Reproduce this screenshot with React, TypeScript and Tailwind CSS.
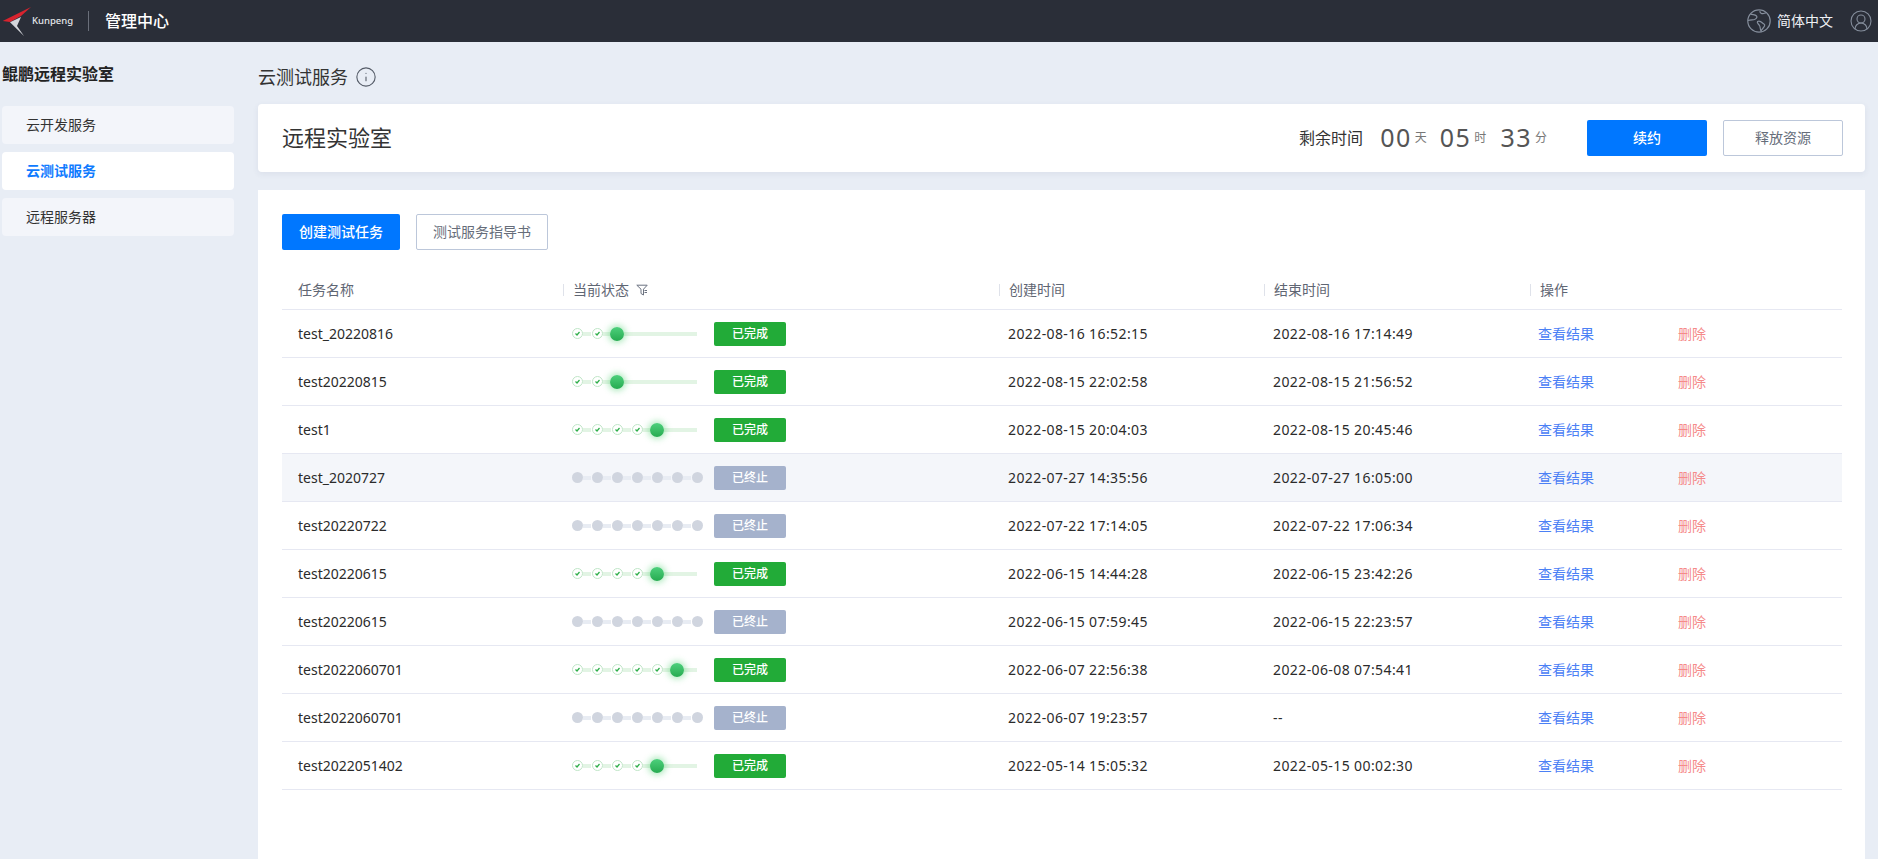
import { CircleUserRound, Info } from 'lucide-react';

const FONT = "font-['Noto_Sans','Noto_Sans_CJK_SC',sans-serif]";

interface Task {
  name: string;
  active: number | null;
  created: string;
  ended: string;
  hover?: boolean;
}

const TASKS: Task[] = [
  { name: 'test_20220816', active: 2, created: '2022-08-16 16:52:15', ended: '2022-08-16 17:14:49' },
  { name: 'test20220815', active: 2, created: '2022-08-15 22:02:58', ended: '2022-08-15 21:56:52' },
  { name: 'test1', active: 4, created: '2022-08-15 20:04:03', ended: '2022-08-15 20:45:46' },
  { name: 'test_2020727', active: null, created: '2022-07-27 14:35:56', ended: '2022-07-27 16:05:00', hover: true },
  { name: 'test20220722', active: null, created: '2022-07-22 17:14:05', ended: '2022-07-22 17:06:34' },
  { name: 'test20220615', active: 4, created: '2022-06-15 14:44:28', ended: '2022-06-15 23:42:26' },
  { name: 'test20220615', active: null, created: '2022-06-15 07:59:45', ended: '2022-06-15 22:23:57' },
  { name: 'test2022060701', active: 5, created: '2022-06-07 22:56:38', ended: '2022-06-08 07:54:41' },
  { name: 'test2022060701', active: null, created: '2022-06-07 19:23:57', ended: '--' },
  { name: 'test2022051402', active: 4, created: '2022-05-14 15:05:32', ended: '2022-05-15 00:02:30' },
];

function Logo() {
  return (
    <svg width="32" height="34" viewBox="0 0 32 34" className="shrink-0">
      <path d="M31 3 L2.7 17 L10 18 L21 12 Z" fill="#d8232e" />
      <path d="M10 18.2 L21 13 L17 22 L24 32 Z" fill="#d3d5da" />
    </svg>
  );
}

function Globe() {
  return (
    <svg width="24" height="24" viewBox="0 0 24 24" fill="none" stroke="#858e9c" strokeWidth="1.2">
      <circle cx="12" cy="12" r="11.2" />
      <path d="M3.5 5 C6 6 8 5.5 9.5 7 C11 8.5 8.5 10 7.5 10.5 C6 11.2 4 10.5 1 11.5" />
      <path d="M13 2 C12.5 4 15 5 16.5 4.5 C18 4 19 3.5 19.5 4" />
      <path d="M10.5 12.5 C12 11.5 14 12.5 15.5 14 C17 15.5 18.5 15 17.5 17 C16.5 19 15 20 14 22 C13 20.5 13.5 18 12.5 16.5 C11.5 15 9.5 14 10.5 12.5 Z" />
    </svg>
  );
}

function FilterIcon() {
  return (
    <svg width="12" height="12" viewBox="0 0 12 12" fill="none" stroke="#6b7280" strokeWidth="1" className="ml-[7px]">
      <path d="M0.8 1.2 H11.2 L7.5 5.2 V11 L5 9.5 V5.2 Z" />
      <path d="M8.5 6.5 H11 M8.5 8.5 H11" />
    </svg>
  );
}

function DoneDot() {
  return (
    <span className="-mx-[0.5px] flex h-[11px] w-[11px] shrink-0 items-center justify-center rounded-full border-[1.5px] border-[#bfe6c7] bg-white">
      <svg width="5" height="5" viewBox="0 0 6 6" fill="none" stroke="#2fae4a" strokeWidth="1.5" className="shrink-0">
        <path d="M0.6 3 L2.4 4.8 L5.4 1.2" />
      </svg>
    </span>
  );
}

function Stepper({ active }: { active: number | null }) {
  const steps = [0, 1, 2, 3, 4, 5, 6];

  if (active === null) {
    return (
      <div className="flex w-[136px] items-center">
        {steps.map((s) => (
          <div key={s} className="flex items-center">
            <span className="-mx-[0.5px] h-[11px] w-[11px] rounded-full bg-[#d0d5df]" />
            {s < 6 && <span className="mx-[1px] h-1 w-2 bg-[#e8ecf3]" />}
          </div>
        ))}
      </div>
    );
  }

  return (
    <div className="flex w-[136px] items-center">
      {steps.map((s) => (
        <div key={s} className="flex items-center">
          {s < active && <DoneDot />}
          {s === active && (
            <span className="relative z-10 flex h-1 w-[10px] items-center justify-center bg-[#e2f4e4]">
              <span className="h-[14px] w-[14px] shrink-0 rounded-full bg-gradient-to-b from-[#4dd07c] to-[#25ab50] shadow-[0_0_6px_2px_rgba(52,199,89,0.4)]" />
            </span>
          )}
          {s > active && <span className={`h-1 bg-[#e2f4e4] ${s === 6 ? 'w-[5px]' : 'w-[10px]'}`} />}
          {s < 6 && (
            <span className={`h-1 bg-[#e2f4e4] ${s < active ? 'mx-[1px] w-2' : 'w-[10px]'}`} />
          )}
        </div>
      ))}
    </div>
  );
}

function StatusBadge({ done }: { done: boolean }) {
  return (
    <span
      className={`flex h-6 w-[72px] items-center justify-center rounded-[2px] text-xs font-medium text-white ${
        done ? 'bg-[#22ab38]' : 'bg-[#a5b2cc]'
      }`}
    >
      {done ? '已完成' : '已终止'}
    </span>
  );
}

function HeadCell({ children, className }: { children: React.ReactNode; className: string }) {
  return (
    <div className={`flex items-center ${className}`}>
      <span className="mr-[9px] h-3 w-px bg-[#dfe2ea]" />
      {children}
    </div>
  );
}

function Timer({ value, unit, className }: { value: string; unit: string; className: string }) {
  return (
    <div className={`flex items-center ${className}`}>
      <span className="text-[25px] tracking-[1.5px] text-[#555]">{value}</span>
      <span className="ml-[3px] text-xs text-[#777]">{unit}</span>
    </div>
  );
}

export default function App() {
  return (
    <div className={`flex h-screen flex-col overflow-hidden bg-[#e8edf5] text-sm text-[#2b2b2b] ${FONT}`}>
      <header className="flex h-[42px] shrink-0 items-center bg-[#2a2e38] pr-[5px] text-white">
        <Logo />
        <span className="text-[9.5px] font-medium text-[#e4e6ea]">Kunpeng</span>
        <span className="ml-[15px] h-5 w-px bg-[#6a6f7a]" />
        <span className="ml-[16px] text-base font-medium">管理中心</span>
        <div className="ml-auto flex items-center">
          <Globe />
          <span className="ml-[6px] text-sm text-[#eef0f4]">简体中文</span>
          <CircleUserRound size={24} strokeWidth={1.1} color="#858e9c" className="ml-4" />
        </div>
      </header>

      <div className="flex min-h-0 flex-1">
        <aside className="w-[258px] shrink-0 pl-[2px]">
          <h2 className="mt-[21px] text-base leading-[22px] font-bold text-[#222]">鲲鹏远程实验室</h2>
          <nav className="mt-[21px] flex w-[232px] flex-col gap-2">
            <div className="flex h-[38px] items-center rounded bg-[#f3f5fa] pl-6 text-[#333]">云开发服务</div>
            <div className="flex h-[38px] items-center rounded bg-white pl-6 font-bold text-[#0f7bff]">云测试服务</div>
            <div className="flex h-[38px] items-center rounded bg-[#f3f5fa] pl-6 text-[#333]">远程服务器</div>
          </nav>
        </aside>

        <main className="flex min-w-0 flex-1 flex-col pr-[13px]">
          <div className="flex h-[62px] shrink-0 items-center">
            <span className="mt-[8px] text-lg text-[#333]">云测试服务</span>
            <Info size={22} strokeWidth={1.2} color="#555c68" className="mt-[8px] ml-[7px]" />
          </div>

          <section className="flex h-[68px] shrink-0 items-center rounded bg-white pr-[22px] pl-6 shadow-[0_2px_6px_rgba(60,80,120,0.08)]">
            <h1 className="text-[22px] text-[#333]">远程实验室</h1>
            <span className="ml-auto text-base text-[#333]">剩余时间</span>
            <Timer value="00" unit="天" className="ml-[17px]" />
            <Timer value="05" unit="时" className="ml-[13px]" />
            <Timer value="33" unit="分" className="ml-[14px]" />
            <button className="ml-10 h-9 w-[120px] rounded-[2px] bg-[#0077ff] text-sm font-medium text-white">续约</button>
            <button className="ml-4 h-9 w-[120px] rounded-[2px] border border-[#bcc7da] bg-white text-sm text-[#666d7a]">
              释放资源
            </button>
          </section>

          <section className="mt-[18px] flex-1 bg-white pt-6 pr-[23px] pl-6">
            <div className="flex gap-4">
              <button className="h-9 w-[118px] rounded-[2px] bg-[#0077ff] text-sm font-medium text-white">创建测试任务</button>
              <button className="h-9 w-[132px] rounded-[2px] border border-[#bcc7da] bg-white text-sm text-[#666d7a]">
                测试服务指导书
              </button>
            </div>

            <div className="mt-4 flex h-[44px] items-center border-b border-[#e6e8f2] pt-1 text-sm text-[#5f6673]">
              <div className="w-[281px] pl-4">任务名称</div>
              <HeadCell className="w-[436px]">
                当前状态
                <FilterIcon />
              </HeadCell>
              <HeadCell className="w-[265px]">创建时间</HeadCell>
              <HeadCell className="w-[266px]">结束时间</HeadCell>
              <HeadCell className="flex-1">操作</HeadCell>
            </div>

            {TASKS.map((t, i) => (
              <div
                key={i}
                className={`flex h-[48px] items-center border-b border-[#e6e8f2] ${t.hover ? 'bg-[#f4f6fa]' : ''}`}
              >
                <div className="w-[281px] pl-4">{t.name}</div>
                <div className="flex w-[436px] items-center pl-[9px]">
                  <Stepper active={t.active} />
                  <div className="ml-[6px]">
                    <StatusBadge done={t.active !== null} />
                  </div>
                </div>
                <div className="w-[265px] pl-[9px] tracking-[0.4px]">{t.created}</div>
                <div className="w-[266px] pl-[9px] tracking-[0.4px]">{t.ended}</div>
                <div className="flex flex-1 items-center pl-2">
                  <span className="w-[140px] text-[#4b80f5]">查看结果</span>
                  <span className="text-[#f58a8a]">删除</span>
                </div>
              </div>
            ))}
          </section>
        </main>
      </div>
    </div>
  );
}
